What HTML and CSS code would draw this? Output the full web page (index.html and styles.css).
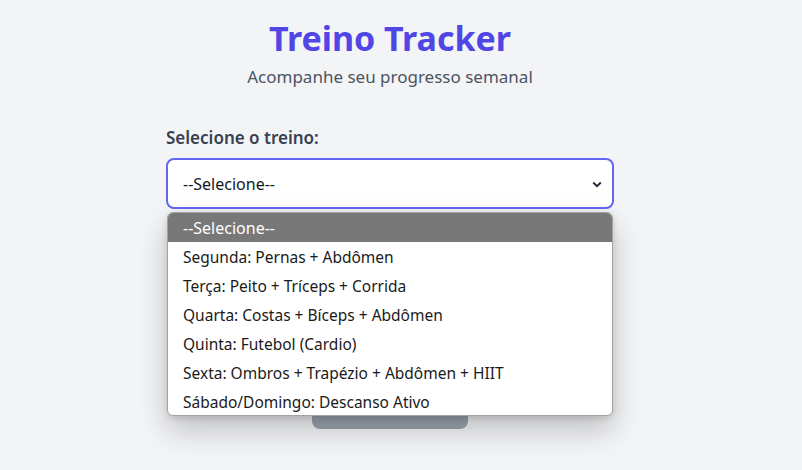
FILE: index.html
```html
<!DOCTYPE html>
<html lang="pt">
<head>
<meta charset="utf-8">
<title>Treino Tracker</title>
<link rel="stylesheet" href="styles.css">
</head>
<body>
<main class="page">
  <header class="header">
    <h1 class="title">Treino Tracker</h1>
    <p class="subtitle">Acompanhe seu progresso semanal</p>
  </header>
  <section class="form">
    <label class="label">Selecione o treino:</label>
    <div class="select-wrap">
      <div class="select">
        <span>--Selecione--</span>
        <svg class="chevron" width="10" height="7" viewBox="0 0 10 7"><path d="M1.2 1.5 L5 5.2 L8.8 1.5" fill="none" stroke="#1f2937" stroke-width="1.9"/></svg>
      </div>
      <ul class="dropdown">
        <li class="opt active">--Selecione--</li>
        <li class="opt">Segunda: Pernas + Abdômen</li>
        <li class="opt">Terça: Peito + Tríceps + Corrida</li>
        <li class="opt">Quarta: Costas + Bíceps + Abdômen</li>
        <li class="opt">Quinta: Futebol (Cardio)</li>
        <li class="opt">Sexta: Ombros + Trapézio + Abdômen + HIIT</li>
        <li class="opt">Sábado/Domingo: Descanso Ativo</li>
      </ul>
    </div>
    <div class="actions">
      <button class="btn" disabled aria-label="Iniciar treino"></button>
    </div>
  </section>
</main>
</body>
</html>
```
FILE: styles.css
```css
* { box-sizing: border-box; }
html, body { margin: 0; padding: 0; }
body {
  background: #f3f4f6;
  font-family: "Noto Sans", "Open Sans", sans-serif;
  color: #1f2937;
  height: 470px;
  overflow: hidden;
}
.page {
  width: 780px;
  display: flex;
  flex-direction: column;
  align-items: center;
  padding-top: 14px;
}
.header { text-align: center; }
.title {
  margin: 0;
  font-size: 34px;
  line-height: 48px;
  font-weight: 700;
  color: #4f46e5;
}
.subtitle {
  margin: 2px 0 0;
  font-size: 17px;
  line-height: 26px;
  color: #4b5563;
}
.form {
  width: 448px;
  margin-top: 36px;
  display: flex;
  flex-direction: column;
}
.label {
  font-size: 17px;
  line-height: 24px;
  font-weight: 600;
  color: #374151;
  margin-bottom: 8px;
}
.select-wrap { position: relative; }
.select {
  height: 51px;
  border: 2px solid #6366f1;
  border-radius: 8px;
  background: #fff;
  display: flex;
  align-items: center;
  justify-content: space-between;
  padding: 0 10px 0 15px;
  font-size: 16px;
  color: #111827;
}
.chevron { margin-top: 1px; }
.dropdown {
  position: absolute;
  top: 54px;
  left: 1px;
  width: 446px;
  margin: 0;
  padding: 0;
  list-style: none;
  background: #fff;
  border: 1px solid #a3a3a3;
  border-radius: 6px;
  overflow: hidden;
  box-shadow: 0 14px 30px rgba(0, 0, 0, 0.22), 0 2px 6px rgba(0, 0, 0, 0.12);
  z-index: 2;
}
.opt {
  height: 29px;
  line-height: 30px;
  padding-left: 15px;
  font-size: 15.5px;
  color: #1a1a1a;
  white-space: nowrap;
}
.opt:last-child { height: 28px; }
.opt.active { background: #787878; color: #fff; font-size: 16px; }
.actions {
  display: flex;
  justify-content: center;
  margin-top: 176px;
}
.btn {
  width: 156px;
  height: 44px;
  border: 0;
  border-radius: 8px;
  background: #9ca3af;
  font-family: inherit;
}
```
